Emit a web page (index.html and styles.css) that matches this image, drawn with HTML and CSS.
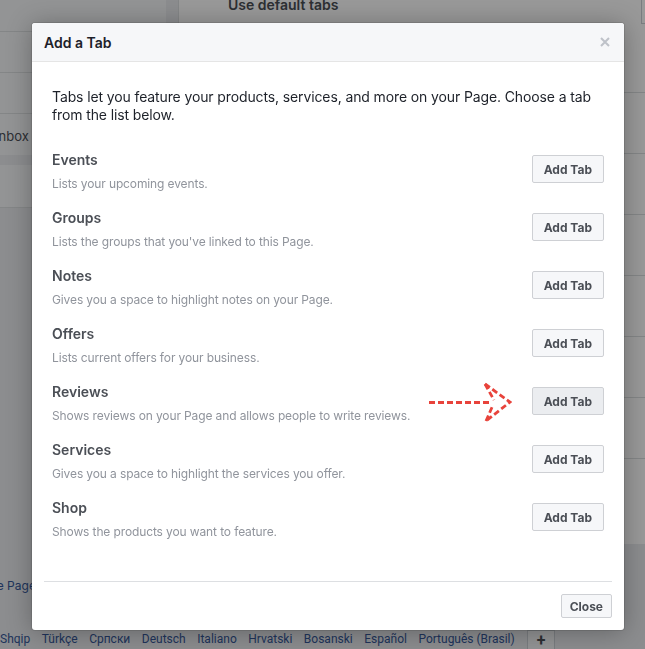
FILE: index.html
```html
<!DOCTYPE html>
<html lang="en">
<head>
    <meta charset="UTF-8">
    <meta name="viewport" content="width=device-width, initial-scale=1.0">
    <title>Add a Tab</title>
    <link rel="stylesheet" href="styles.css">
</head>
<body>
    <div class="page">
        <div class="columns">
            <aside class="side">
                <div class="side-box">
                    <div class="side-row"></div>
                    <div class="side-row"></div>
                    <div class="side-row"></div>
                    <div class="side-row side-label">Inbox</div>
                </div>
                <div class="side-box side-small"></div>
            </aside>
            <main class="main">
                <div class="main-head">
                    <span class="main-title">Use default tabs</span>
                    <span class="main-toggle"></span>
                </div>
                <div class="main-row"></div>
                <div class="main-row"></div>
                <div class="main-row"></div>
                <div class="main-row"></div>
                <div class="main-row"></div>
                <div class="main-row"></div>
                <div class="main-row main-last"></div>
            </main>
        </div>
        <div class="page-link">Create Page</div>
        <div class="langs">
            <span>Shqip</span>
            <span>Türkçe</span>
            <span>Српски</span>
            <span>Deutsch</span>
            <span>Italiano</span>
            <span>Hrvatski</span>
            <span>Bosanski</span>
            <span>Español</span>
            <span>Português (Brasil)</span>
            <span class="lang-more">+</span>
        </div>
    </div>

    <div class="overlay"></div>

    <div class="dialog">
        <div class="dialog-head">
            <h1>Add a Tab</h1>
            <svg class="dialog-x" width="10" height="10" viewBox="0 0 10 10">
                <path d="M1 1 L9 9 M9 1 L1 9" stroke="#bec2c9" stroke-width="2" fill="none"/>
            </svg>
        </div>
        <div class="dialog-body">
            <p class="intro">Tabs let you feature your products, services, and more on your Page. Choose a tab from the list below.</p>
            <div class="tab-list">
                <div class="tab-row">
                    <div class="tab-text">
                        <div class="tab-name">Events</div>
                        <div class="tab-desc">Lists your upcoming events.</div>
                    </div>
                    <button class="btn">Add Tab</button>
                </div>
                <div class="tab-row">
                    <div class="tab-text">
                        <div class="tab-name">Groups</div>
                        <div class="tab-desc">Lists the groups that you've linked to this Page.</div>
                    </div>
                    <button class="btn">Add Tab</button>
                </div>
                <div class="tab-row">
                    <div class="tab-text">
                        <div class="tab-name">Notes</div>
                        <div class="tab-desc">Gives you a space to highlight notes on your Page.</div>
                    </div>
                    <button class="btn">Add Tab</button>
                </div>
                <div class="tab-row">
                    <div class="tab-text">
                        <div class="tab-name">Offers</div>
                        <div class="tab-desc">Lists current offers for your business.</div>
                    </div>
                    <button class="btn">Add Tab</button>
                </div>
                <div class="tab-row">
                    <div class="tab-text">
                        <div class="tab-name">Reviews</div>
                        <div class="tab-desc">Shows reviews on your Page and allows people to write reviews.</div>
                    </div>
                    <!-- red hint arrow -->
                    <svg class="hint-arrow" width="84" height="40" viewBox="0 0 84 40">
                        <g stroke="#e8433b" stroke-width="2.8" fill="none" stroke-dasharray="6 3">
                            <path d="M1 20.5 L64 20.5"/>
                            <path d="M57 2 L82 20 L58 39"/>
                            <path d="M57 2 L66 18 M58 39 L65 23"/>
                        </g>
                    </svg>
                    <button class="btn btn-hover">Add Tab</button>
                </div>
                <div class="tab-row">
                    <div class="tab-text">
                        <div class="tab-name">Services</div>
                        <div class="tab-desc">Gives you a space to highlight the services you offer.</div>
                    </div>
                    <button class="btn">Add Tab</button>
                </div>
                <div class="tab-row">
                    <div class="tab-text">
                        <div class="tab-name">Shop</div>
                        <div class="tab-desc">Shows the products you want to feature.</div>
                    </div>
                    <button class="btn">Add Tab</button>
                </div>
            </div>
        </div>
        <div class="dialog-foot">
            <button class="btn btn-small">Close</button>
        </div>
    </div>
</body>
</html>
```

FILE: styles.css
```css
/* Page behind the dialog */
body {
    margin: 0;
    font-family: 'Inter', 'Liberation Sans', sans-serif;
    background: #e9ebee;
    overflow: hidden;
    height: 649px;
}

.page {
    height: 649px;
    display: flex;
    flex-direction: column;
}

.columns {
    display: flex;
    gap: 12px;
    height: 544px;
}

.side {
    width: 206px;
    margin-left: -40px;
    display: flex;
    flex-direction: column;
    gap: 10px;
}

.side-box {
    background: #f6f7f9;
}

.side-row {
    height: 41px;
    border-bottom: 1px solid #dddfe2;
    box-sizing: border-box;
}

.side-row:first-child {
    height: 32px;
}

.side-label {
    border-bottom: none;
    font-size: 13px;
    color: #4b4f56;
    padding: 14px 0 0 35px;
}

.side-small {
    height: 42px;
    border-bottom: 1px solid #dddfe2;
}

.main {
    flex: 1;
    background: #fff;
    border-left: 1px solid #dddfe2;
}

.main-head {
    height: 93px;
    display: flex;
    justify-content: space-between;
    padding-left: 49px;
    border-bottom: 1px solid #dddfe2;
    box-sizing: border-box;
}

.main-title {
    font-size: 14px;
    font-weight: 600;
    color: #4b4f56;
    margin-top: -4px;
}

.main-toggle {
    width: 8px;
    height: 24px;
    margin-right: -4px;
    border: 1px solid #ccd0d5;
    border-top: none;
    box-sizing: border-box;
}

.main-row {
    height: 61px;
    border-bottom: 1px solid #dddfe2;
    box-sizing: border-box;
}

.main-last {
    height: 85px;
    border-bottom: none;
}

.page-link {
    margin: 34px 0 0 -34px;
    font-size: 12px;
    color: #365899;
}

.langs {
    margin-top: auto;
    display: flex;
    align-items: flex-end;
    gap: 11.5px;
    font-family: 'Roboto', 'Liberation Sans', sans-serif;
    font-size: 12px;
    color: #365899;
    white-space: nowrap;
    height: 19px;
}

.langs span {
    padding-bottom: 3px;
}

.langs .lang-more {
    width: 28px;
    height: 19px;
    box-sizing: border-box;
    padding: 0;
    margin-left: 1px;
    background: #f6f7f9;
    border: 1px solid #ccd0d5;
    border-bottom: none;
    text-align: center;
    font-size: 16px;
    font-weight: bold;
    color: #4b4f56;
}

.overlay {
    position: fixed;
    inset: 0;
    background: rgba(0, 0, 0, 0.4);
}

/* Dialog */
.dialog {
    position: absolute;
    top: 23px;
    left: 32px;
    width: 592px;
    background: #fff;
    border-radius: 3px;
    box-shadow: 0 2px 26px rgba(0, 0, 0, 0.3), 0 0 0 1px rgba(0, 0, 0, 0.1);
    overflow: hidden;
}

.dialog-head {
    height: 39px;
    box-sizing: border-box;
    background: #f6f7f9;
    border-bottom: 1px solid #e5e5e5;
    display: flex;
    align-items: center;
    justify-content: space-between;
    padding: 0 14px 0 12px;
}

.dialog-head h1 {
    margin: 0;
    font-size: 14px;
    font-weight: 600;
    color: #1d2129;
}

.dialog-body {
    padding: 26px 20px 40px;
}

.intro {
    margin: 0 0 27px;
    font-size: 14px;
    line-height: 18px;
    letter-spacing: -0.12px;
    color: #1d2129;
}

.tab-list {
    display: flex;
    flex-direction: column;
    gap: 16px;
}

.tab-row {
    display: flex;
    align-items: flex-start;
}

.tab-text {
    flex: 1;
}

.tab-name {
    font-size: 14px;
    font-weight: 600;
    line-height: 18px;
    color: #4b4f56;
}

.tab-desc {
    margin-top: 6px;
    font-size: 12px;
    line-height: 18px;
    letter-spacing: -0.12px;
    color: #90949c;
}

.hint-arrow {
    margin: -1px 20px 0 0;
}

.btn {
    margin-top: 4px;
    height: 28px;
    padding: 0 11px;
    background: #f6f7f9;
    border: 1px solid #ced0d4;
    border-radius: 2px;
    font-family: inherit;
    font-size: 12px;
    font-weight: bold;
    color: #4b4f56;
}

.btn-hover {
    background: #ebedf0;
}

.dialog-foot {
    margin: 0 12px;
    padding: 12px 0;
    border-top: 1px solid #dddfe2;
    display: flex;
    justify-content: flex-end;
}

.btn-small {
    margin: 0;
    height: 24px;
    padding: 0 8px;
}
```
